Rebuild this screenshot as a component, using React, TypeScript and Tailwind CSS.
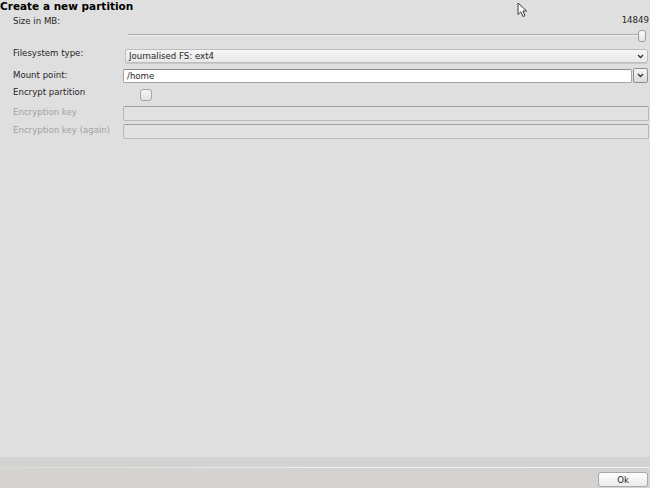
import React from "react";

function Chevron({ className = "" }: { className?: string }) {
  return (
    <svg width="7" height="5" viewBox="0 0 7 5" className={className}>
      <path d="M1 1 L3.5 3.5 L6 1" fill="none" stroke="#333" strokeWidth="1.3" />
    </svg>
  );
}

function Cursor() {
  return (
    <svg width="12" height="16" viewBox="0 0 12 16" className="absolute left-[517px] top-[2px]">
      <path
        d="M1 1 L1 12.5 L3.8 9.8 L6 14.5 L8 13.6 L5.9 9 L9.6 9 Z"
        fill="#fafafa"
        stroke="#3a3a3a"
        strokeWidth="1"
        strokeLinejoin="round"
      />
    </svg>
  );
}

export default function App() {
  return (
    <div
      className="relative w-[650px] h-[488px] flex flex-col bg-[#dfdfdf] text-[#262626] overflow-hidden"
      style={{ fontFamily: '"DejaVu Sans", "Liberation Sans", sans-serif' }}
    >
      <div className="flex-1 flex flex-col">
        <div className="h-[13px] text-[10.5px] font-bold leading-[13px] text-black">Create a new partition</div>

        {/* size row */}
        <div className="flex items-start justify-between h-[16px] text-[8.6px] leading-[10px]">
          <div className="pl-[13px] mt-[3px]">Size in MB:</div>
          <div className="mt-[2px] pr-px">14849</div>
        </div>

        {/* slider */}
        <div className="flex items-start h-[14px] pl-[128px] pr-[4px]">
          <div className="flex-1 mt-[5px] h-[2px] border-t border-[#a9a9a9] bg-[#f2f2f2]" />
          <div className="-ml-px mt-px w-[8px] h-[12px] rounded-[3px] border border-[#9c9c9c] bg-gradient-to-b from-[#fbfbfb] to-[#e4e4e4]" />
        </div>

        <div className="h-[6px]" />

        {/* filesystem */}
        <div className="flex items-start h-[14px] text-[8.6px] leading-[10px]">
          <div className="w-[125px] pl-[13px] -mt-[1px]">Filesystem type:</div>
          <div className="flex-1 mr-[2px] h-[14px] flex items-center justify-between rounded-[3px] border border-[#bdbdbd] bg-gradient-to-b from-[#f6f6f6] to-[#e8e8e8] shadow-[0_1px_0_#c8c8c8] pl-[3px] pr-[3px]">
            <span>Journalised FS: ext4</span>
            <Chevron />
          </div>
        </div>

        <div className="h-[6px]" />

        {/* mount point */}
        <div className="flex items-start h-[14px] text-[8.6px] leading-[10px]">
          <div className="w-[123px] pl-[13px] mt-[1px]">Mount point:</div>
          <div className="flex-1 h-[14px] flex items-center bg-white border border-[#a3a3a3] border-t-[#8a8a8a] rounded-[2px] pl-[3px]">
            /home
          </div>
          <div className="w-[15px] h-[15px] -mt-px ml-px mr-[2px] flex items-center justify-center border border-[#8e8e8e] rounded-[2px] bg-gradient-to-b from-[#f4f4f4] to-[#dadada]">
            <Chevron />
          </div>
        </div>

        <div className="h-[6px]" />

        {/* encrypt */}
        <div className="flex items-start h-[12px] text-[8.6px] leading-[10px]">
          <div className="w-[140px] pl-[13px] -mt-[2px]">Encrypt partition</div>
          <div className="w-[12px] h-[12px] rounded-[3px] border border-[#a4a4a4] bg-gradient-to-b from-[#f3f3f3] to-[#e2e2e2]" />
        </div>

        <div className="h-[5px]" />

        {/* encryption key */}
        <div className="flex items-start h-[15px] text-[8.6px] leading-[10px] text-[#a2a2a2]">
          <div className="w-[123px] pl-[13px] mt-[1px]">Encryption key</div>
          <div className="flex-1 mr-px h-[15px] rounded-[2px] border border-[#b9b9b9] border-t-[#a0a0a0] bg-[#e2e2e2]" />
        </div>

        <div className="h-[3px]" />

        <div className="flex items-start h-[15px] text-[8.6px] leading-[10px] text-[#a2a2a2]">
          <div className="w-[123px] pl-[13px] mt-[1px]">Encryption key (again)</div>
          <div className="flex-1 mr-px h-[15px] rounded-[2px] border border-[#b9b9b9] border-t-[#a0a0a0] bg-[#e2e2e2]" />
        </div>
      </div>

      {/* bottom bar */}
      <div className="h-[31px] bg-[#d4d3d1] flex flex-col">
        <div className="h-[10px]" />
        <div className="h-px bg-gradient-to-r from-[#dadad8] via-[#eeeeee] to-[#f2f2f2]" />
        <div className="flex-1 flex justify-end items-start pr-[2px] pt-[4px]">
          <button className="w-[50px] h-[15px] rounded-[3px] border border-[#a9a9a9] bg-gradient-to-b from-[#fdfdfd] to-[#ebebeb] text-[8.6px] leading-[10px] text-[#262626] flex items-center justify-center">
            Ok
          </button>
        </div>
      </div>

      <Cursor />
    </div>
  );
}
